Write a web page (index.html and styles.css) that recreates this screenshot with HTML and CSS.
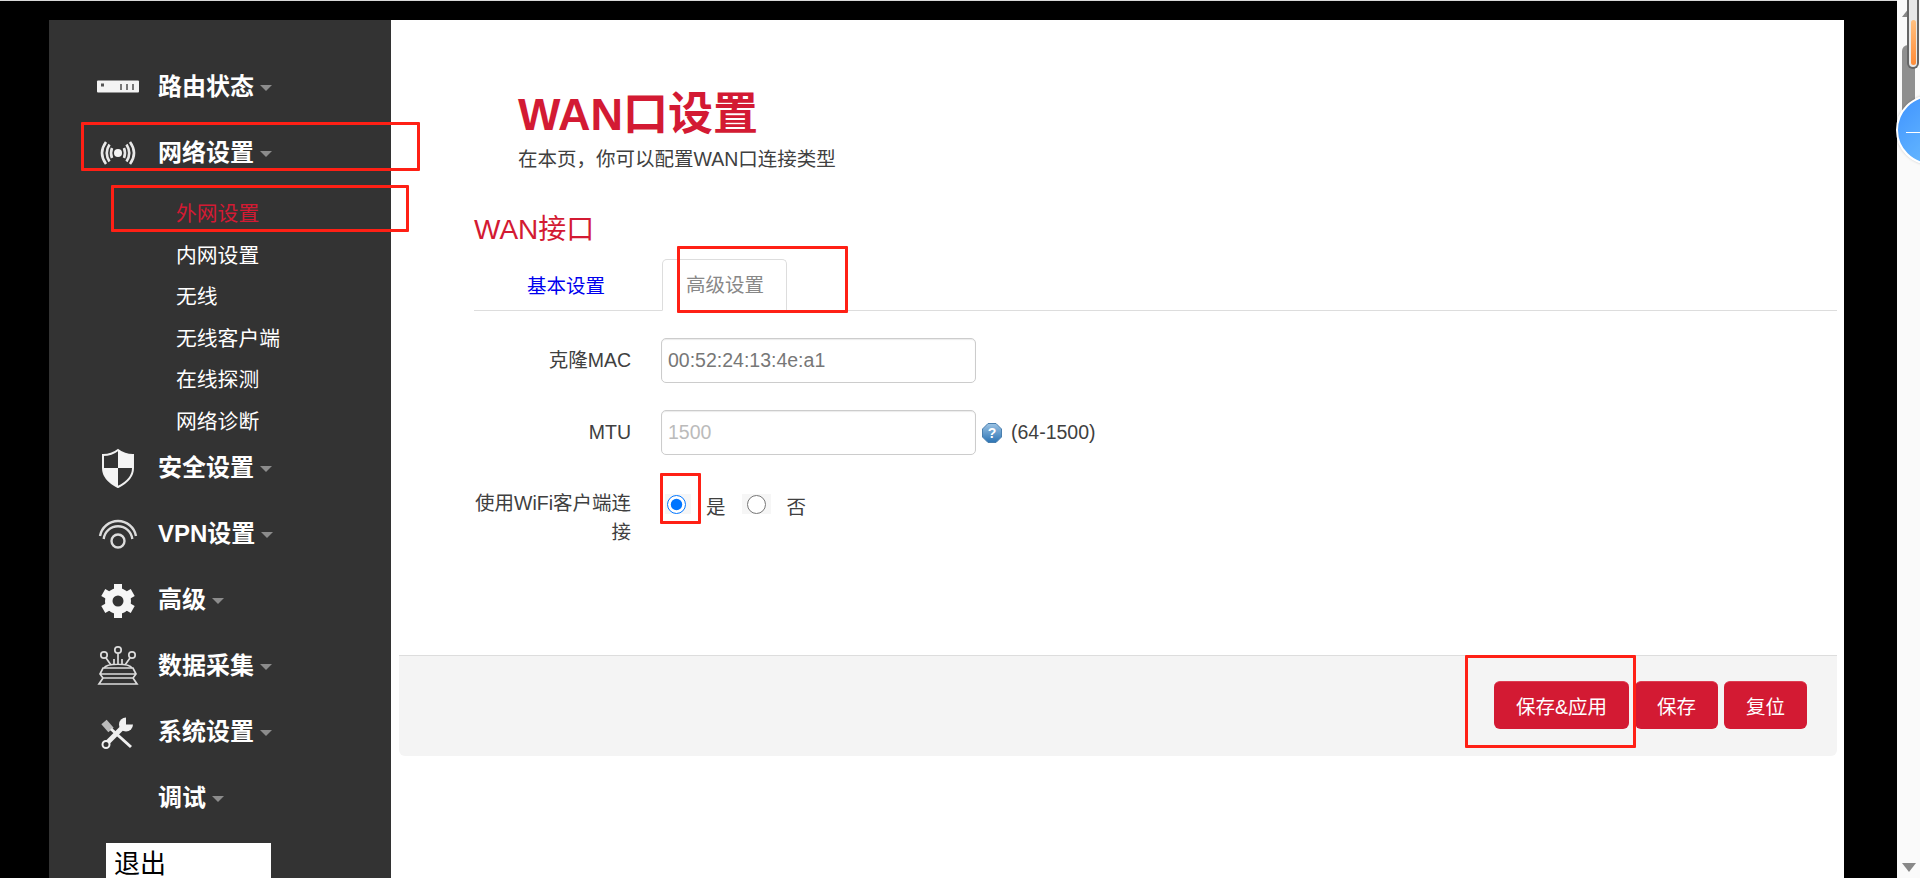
FILE: index.html
```html
<!DOCTYPE html>
<html lang="zh-CN">
<head>
<meta charset="utf-8">
<title>WAN口设置</title>
<link rel="stylesheet" href="styles.css">
</head>
<body>
<div class="frame">
  <aside class="sidebar">
    <div class="nav-item">
      <span class="nav-icon"><svg width="46" height="46" viewBox="0 0 46 46"><rect x="2" y="17.500" width="42" height="12" rx="1" fill="#f4f4f4"/><rect x="6" y="20.500" width="3" height="3" fill="#555"/><rect x="25" y="21" width="2" height="6" fill="#777"/><rect x="31" y="21" width="2" height="6" fill="#777"/><rect x="37" y="21" width="2" height="6" fill="#777"/></svg></span>
      <span class="nav-label">路由状态</span><span class="caret"></span>
    </div>
    <div class="nav-item">
      <span class="nav-icon"><svg width="46" height="46" viewBox="0 0 46 46" fill="none" stroke="#e8e8e8" stroke-width="2.600"><circle cx="23" cy="24" r="4" fill="#f4f4f4" stroke="none"/><path d="M11 13Q3 24 11 35M14.500 15.500Q9 24 14.500 32.500M17 19Q15 24 17 29M35 13Q43 24 35 35M31.500 15.500Q37 24 31.500 32.500M29 19Q31 24 29 29"/></svg></span>
      <span class="nav-label">网络设置</span><span class="caret"></span>
    </div>
    <ul class="submenu">
      <li class="active">外网设置</li>
      <li>内网设置</li>
      <li>无线</li>
      <li>无线客户端</li>
      <li>在线探测</li>
      <li>网络诊断</li>
    </ul>
    <div class="nav-item">
      <span class="nav-icon"><svg width="46" height="46" viewBox="0 0 46 46"><path d="M23 5C28 9 33 10 38 10L38 23C38 32 31 38 23 42C15 38 8 32 8 23L8 10C13 10 18 9 23 5Z" fill="none" stroke="#f0f0f0" stroke-width="2"/><path d="M23 5C28 9 33 10 38 10L38 23L23 23ZM8 23L23 23L23 42C15 38 8 32 8 23Z" fill="#f4f4f4"/></svg></span>
      <span class="nav-label">安全设置</span><span class="caret"></span>
    </div>
    <div class="nav-item">
      <span class="nav-icon"><svg width="46" height="46" viewBox="0 0 46 46" fill="none" stroke="#dcdcdc" stroke-width="2.400"><circle cx="23" cy="30" r="6.500"/><path d="M8.700 28A14.400 14.400 0 0 1 37.300 28M5 25A18.300 18.300 0 0 1 41 25"/></svg></span>
      <span class="nav-label">VPN设置</span><span class="caret"></span>
    </div>
    <div class="nav-item">
      <span class="nav-icon"><svg width="46" height="46" viewBox="0 0 46 46"><g stroke="#f6f6f6" stroke-width="8"><line x1="23" y1="7" x2="23" y2="41"/><line x1="23" y1="7" x2="23" y2="41" transform="rotate(60 23 24)"/><line x1="23" y1="7" x2="23" y2="41" transform="rotate(120 23 24)"/></g><circle cx="23" cy="24" r="13" fill="#f6f6f6"/><circle cx="23" cy="24" r="5.500" fill="#333"/></svg></span>
      <span class="nav-label">高级</span><span class="caret"></span>
    </div>
    <div class="nav-item">
      <span class="nav-icon"><svg width="46" height="46" viewBox="0 0 46 46" fill="none" stroke="#dcdcdc" stroke-width="1.700"><circle cx="9" cy="12" r="3.200"/><circle cx="23" cy="7" r="3.200"/><circle cx="37" cy="12" r="3.200"/><path d="M11 15L16 22M23 10.500V22M35 15L30 22M19 16V22M27 16V22M9 25C12 20 34 20 37 25"/><path d="M8 25H38L41 31L38 35L42 41H4L8 35L5 31ZM5 31H41M8 35H38"/></svg></span>
      <span class="nav-label">数据采集</span><span class="caret"></span>
    </div>
    <div class="nav-item">
      <span class="nav-icon"><svg width="46" height="46" viewBox="0 0 46 46"><path d="M9 13L16 21" stroke="#bbb" stroke-width="7"/><path d="M16 20L36 38" stroke="#f0f0f0" stroke-width="3"/><path d="M11 35L30 16" stroke="#f0f0f0" stroke-width="5"/><circle cx="31" cy="15.500" r="7" fill="#f0f0f0"/><path d="M31 15.500L31 7L39 7L39 15.500Z" fill="#333"/><circle cx="11" cy="35.500" r="3.500" fill="#333" stroke="#f0f0f0" stroke-width="2"/></svg></span>
      <span class="nav-label">系统设置</span><span class="caret"></span>
    </div>
    <div class="nav-item">
      <span class="nav-icon"></span>
      <span class="nav-label">调试</span><span class="caret"></span>
    </div>
    <div class="logout">退出</div>
  </aside>

  <main class="content">
    <header class="page-head">
      <h1>WAN口设置</h1>
      <p>在本页，你可以配置WAN口连接类型</p>
    </header>

    <section class="panel">
      <h2>WAN接口</h2>
      <div class="tabs">
        <a class="tab">基本设置</a>
        <a class="tab tab-active">高级设置</a>
      </div>
      <form class="form">
        <label class="field-label">克隆MAC</label>
        <div class="field"><input class="text-input" type="text" value="00:52:24:13:4e:a1"></div>
        <label class="field-label">MTU</label>
        <div class="field">
          <input class="text-input" type="text" placeholder="1500">
          <svg class="help" width="20" height="20" viewBox="0 0 20 20"><defs><linearGradient id="helpfill" x1="0" y1="0" x2="0" y2="1"><stop offset="0" stop-color="#9cc3e4"/><stop offset="1" stop-color="#2c74b4"/></linearGradient></defs><path d="M6 .5H14L19.500 6V14L14 19.500H6L.5 14V6Z" fill="url(#helpfill)" stroke="#4a7fae"/><text x="10" y="15" text-anchor="middle" class="help-mark">?</text></svg>
          <span class="hint">(64-1500)</span>
        </div>
        <label class="field-label field-label-radio">使用WiFi客户端连接</label>
        <div class="radios">
          <span class="radio-box radio-yes"><input type="radio" name="wifi" checked></span>
          <span class="radio-text radio-text-yes">是</span>
          <span class="radio-box radio-no"><input type="radio" name="wifi"></span>
          <span class="radio-text">否</span>
        </div>
      </form>
    </section>

    <div class="actions">
      <button class="btn btn-apply" type="button">保存&amp;应用</button>
      <button class="btn" type="button">保存</button>
      <button class="btn" type="button">复位</button>
    </div>
  </main>
</div>

<div class="scrollbar">
  <span class="arrow-up"></span>
  <span class="thumb"></span>
  <span class="meter"></span>
  <span class="meter-fill"></span>
  <span class="arrow-down"></span>
  <span class="float-ball"><span class="ball-dash"></span></span>
</div>

<div class="mark mark-nav"></div>
<div class="mark mark-sub"></div>
<div class="mark mark-tab"></div>
<div class="mark mark-radio"></div>
<div class="mark mark-save"></div>
</body>
</html>
```

FILE: styles.css
```css
* { box-sizing: border-box; }

html, body {
  margin: 0;
  height: 878px;
  overflow: hidden;
}

body {
  position: relative;
  display: flex;
  background: #000;
  font-family: "Liberation Sans", "Noto Sans CJK SC", sans-serif;
  font-size: 19.5px;
  color: #404040;
}

.frame {
  flex: 1;
  display: flex;
  min-width: 0;
  padding: 19px 53px 0 49px;
  border-top: 1px solid #d8d8d8;
}

/* sidebar */
.sidebar {
  width: 342px;
  flex: none;
  height: 858px;
  padding-top: 33px;
  background: #333;
  color: #fff;
  overflow: hidden;
}

.nav-item {
  display: flex;
  align-items: center;
  height: 66px;
  padding-left: 46px;
}

.nav-icon {
  width: 46px;
  height: 46px;
  flex: none;
  margin-right: 17px;
}

.nav-icon svg { display: block; }

.nav-label {
  margin-top: 1px;
  font-size: 24px;
  font-weight: 700;
  line-height: 30px;
}

.caret {
  width: 0;
  height: 0;
  margin: 3px 0 0 6px;
  border-left: 6px solid transparent;
  border-right: 6px solid transparent;
  border-top: 6px solid #8c8c8c;
}

.submenu {
  list-style: none;
  margin: 8px 0 -8px;
  padding: 0 0 0 127px;
  font-size: 20.8px;
}

.submenu li {
  height: 41.6px;
  line-height: 41.6px;
}

.submenu .active { color: #d31a33; }

.logout {
  width: 165px;
  height: 46px;
  margin: 12px 0 0 57px;
  padding-left: 8px;
  background: #fff;
  color: #000;
  font-size: 26px;
  line-height: 42px;
}

/* content */
.content {
  flex: 1;
  min-width: 0;
  height: 858px;
  padding: 0 7px 0 8px;
  background: #fff;
}

.page-head {
  padding: 70px 0 0 119px;
}

.page-head h1 {
  margin: 0;
  color: #d31a33;
  font-size: 45px;
  font-weight: 700;
  line-height: 50px;
}

.page-head p {
  margin: 7px 0 0;
  line-height: 24px;
}

.panel {
  margin-left: 75px;
}

.panel h2 {
  margin: 41px 0 0;
  color: #d31a33;
  font-size: 28px;
  font-weight: 400;
  line-height: 36px;
}

.tabs {
  display: flex;
  height: 52px;
  margin-top: 11px;
  border-bottom: 1px solid #ddd;
}

.tab {
  height: 52px;
  margin-left: 53px;
  color: #0000ee;
  line-height: 54px;
}

.tab-active {
  width: 125px;
  margin-left: 57px;
  padding-left: 23px;
  border: 1px solid #ddd;
  border-bottom-color: #fff;
  border-radius: 5px 5px 0 0;
  background: #fff;
  color: #888;
  line-height: 50px;
}

.form {
  display: grid;
  grid-template-columns: 157px 1fr;
  column-gap: 30px;
  row-gap: 27px;
  margin-top: 27px;
}

.field-label {
  line-height: 45px;
  text-align: right;
}

.field-label-radio {
  margin-top: 6.500px;
  line-height: 29px;
}

.field {
  display: flex;
  align-items: center;
  height: 45px;
}

.text-input {
  width: 315px;
  height: 45px;
  padding: 0 6px;
  border: 1px solid #ccc;
  border-radius: 5px;
  background: #fff;
  box-shadow: inset 0 1px 1px rgba(0, 0, 0, .08);
  color: #777;
  font: inherit;
}

.text-input::placeholder {
  color: #bbb;
  opacity: 1;
}

.help {
  margin-left: 6px;
  flex: none;
}

.help-mark {
  fill: #fff;
  font-size: 14px;
  font-weight: 700;
}

.hint { margin-left: 9px; }

.radios {
  display: flex;
  align-items: flex-start;
  margin-top: 6.500px;
  line-height: 29px;
}

.radio-box {
  display: flex;
  align-items: center;
  height: 20px;
  margin-top: 5.500px;
  background: #f6f6f6;
}

.radio-box input {
  width: 19px;
  height: 19px;
  margin: 0;
}

.radio-yes {
  width: 26px;
  margin-left: 4px;
  padding-left: 1.500px;
}

.radio-no {
  width: 29px;
  padding-left: 5px;
}

.radio-text {
  margin-left: 16px;
  margin-top: 4px;
  line-height: 29px;
}

.radio-text-yes {
  margin-left: 15px;
  margin-right: 16px;
}

.actions {
  display: flex;
  justify-content: flex-end;
  gap: 6px;
  height: 101px;
  margin-top: 108px;
  padding: 25px 30px 0 0;
  border-top: 1px solid #ddd;
  border-radius: 0 0 6px 6px;
  background: #f4f4f4;
}

.btn {
  height: 48px;
  padding: 0 22px;
  border: 0;
  border-top: 1px solid #dd3e52;
  border-radius: 6px;
  background: #d31a33;
  color: #fff;
  font: inherit;
}

.btn-apply {
  width: 135px;
  padding: 0;
}

/* browser scrollbar and floating ball */
.scrollbar {
  position: relative;
  flex: none;
  width: 23px;
  height: 878px;
  background: #fafafa;
}

.arrow-up,
.arrow-down {
  position: absolute;
  left: 5px;
  width: 0;
  height: 0;
  border-left: 7px solid transparent;
  border-right: 7px solid transparent;
}

.arrow-up {
  top: 8px;
  border-bottom: 9px solid #888;
}

.arrow-down {
  top: 863px;
  border-top: 9px solid #888;
}

.thumb {
  position: absolute;
  top: 45px;
  left: 5px;
  width: 13px;
  height: 70px;
  border-radius: 6px 6px 0 0;
  background: #8f8f8f;
}

.meter {
  position: absolute;
  top: 0;
  left: 10px;
  width: 12px;
  height: 69px;
  border: 2px solid #666;
  border-top: 0;
  border-radius: 0 0 6px 6px;
  background: #e8e8e8;
}

.meter-fill {
  position: absolute;
  top: 20px;
  left: 14px;
  width: 5px;
  height: 45px;
  border-radius: 3px;
  background: linear-gradient(#ffc080, #ff8c38);
}

.float-ball {
  position: absolute;
  top: 95px;
  left: -1px;
  width: 70px;
  height: 70px;
  border: 2px solid #fff;
  border-radius: 50%;
  background: linear-gradient(135deg, #3f93ff, #74c6ff);
  box-shadow: 0 0 3px rgba(0, 0, 0, .2);
}

.ball-dash {
  position: absolute;
  top: 35px;
  left: 8px;
  width: 16px;
  height: 1px;
  background: #fff;
}

/* red annotation rectangles drawn over the screenshot */
.mark {
  position: absolute;
  border: 3px solid #ff2015;
  border-radius: 1px;
  pointer-events: none;
}

.mark-nav { left: 81px; top: 122px; width: 339px; height: 49px; }
.mark-sub { left: 111px; top: 185px; width: 298px; height: 47px; }
.mark-tab { left: 677px; top: 246px; width: 171px; height: 67px; }
.mark-radio { left: 660px; top: 473px; width: 41px; height: 51px; }
.mark-save { left: 1465px; top: 655px; width: 171px; height: 93px; }
```
